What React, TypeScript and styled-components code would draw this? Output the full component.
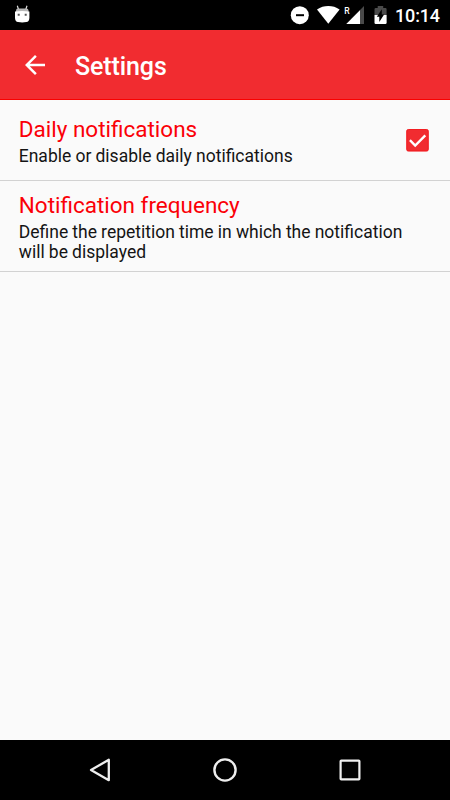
import React from "react";
import styled, { createGlobalStyle } from "styled-components";

const GlobalStyle = createGlobalStyle`
  * { box-sizing: border-box; }
  html, body { margin: 0; padding: 0; }
  body { background: #fafafa; font-family: Roboto, "Liberation Sans", sans-serif; }
  button { border: 0; padding: 0; margin: 0; background: none; font: inherit; }
`;

const Screen = styled.div`
  width: 450px;
  height: 800px;
  display: flex;
  flex-direction: column;
  background: #fafafa;
  overflow: hidden;
`;

const StatusBar = styled.header`
  height: 30px;
  flex: none;
  display: flex;
  justify-content: space-between;
  background: #000;
  color: #fff;
`;

const StatusGroup = styled.div`
  display: flex;
  align-items: center;
`;

const StatusIcon = styled.svg`
  display: block;
  flex: none;
`;

const Clock = styled.span`
  width: 55px;
  padding-top: 2px;
  font-size: 18px;
  letter-spacing: -0.15px;
  line-height: 28px;
  font-weight: 500;
  white-space: nowrap;
`;

const Toolbar = styled.nav`
  height: 70px;
  flex: none;
  display: flex;
  align-items: center;
  background: #f12c30;
  border-bottom: 1px solid #fa0000;
`;

const BackButton = styled.button`
  width: 30px;
  height: 30px;
  margin: 1px 0 0 20px;
  display: block;
`;

const ToolbarTitle = styled.h1`
  margin: 5px 0 0 25px;
  color: #fff;
  font-size: 25px;
  letter-spacing: -0.1px;
  line-height: 30px;
  font-weight: 500;
`;

const Preferences = styled.main`
  flex: 1;
`;

const PreferenceRow = styled.section<{ $height: number; $top: number }>`
  height: ${(p) => p.$height}px;
  padding: ${(p) => p.$top}px 19px 0 18.75px;
  display: flex;
  justify-content: space-between;
  border-bottom: 1px solid #d2d2d2;
`;

const PreferenceText = styled.div`
  max-width: 400px;
`;

const PreferenceTitle = styled.h2`
  margin: 0;
  color: #fb0007;
  font-size: 22.5px;
  line-height: 27px;
  font-weight: 400;
`;

const PreferenceSummary = styled.p`
  margin: 3px 0 0;
  color: #141414;
  font-size: 17.5px;
  word-spacing: -0.18px;
  line-height: 20px;
  font-weight: 400;
`;

const CheckButton = styled.button`
  width: 25px;
  height: 25px;
  margin-top: 12px;
  flex: none;
`;

const NavBar = styled.footer`
  height: 60px;
  flex: none;
  display: flex;
  justify-content: center;
  background: #000;
`;

const NavButton = styled.button`
  width: 125px;
  height: 60px;
  display: flex;
  align-items: center;
  justify-content: center;
`;

function StatusIcons() {
  return (
    <StatusIcon width="115" height="30" viewBox="280 0 115 30">
      <circle cx="299.8" cy="15.2" r="9" fill="#fff" />
      <path d="M296 15.2h8" stroke="#000" strokeWidth="2" />
      <path d="M328.3 23.7 317 9.4Q322.2 6 328.3 6T339.6 9.4Z" fill="#fff" />
      <text x="344.3" y="13.6" fill="#fff" fontSize="9.4" fontWeight="500" fontFamily="Roboto, sans-serif" textLength="5.4" lengthAdjust="spacingAndGlyphs">R</text>
      <path d="M364 6v18h-17.7Z" fill="#4a4a4a" />
      <path d="M360 10.2V24h-13.7Z" fill="#fff" />
      <path d="M375.7 8h2V6h5.5v2h2.2q1.2 0 1.2 1.2V15h-12.1V9.2q0-1.2 1.2-1.2Z" fill="#4a4a4a" />
      <path d="M374.5 15h12.1v7.8q0 1.2-1.2 1.2h-9.7q-1.2 0-1.2-1.2Z" fill="#fff" />
      <path d="M381.8 9.3v5.3h2.3L379.3 22v-5.3h-2.5Z" fill="#000" />
    </StatusIcon>
  );
}

function RobotIcon() {
  return (
    <StatusIcon width="45" height="30" viewBox="0 0 45 30">
      <path d="m17.3 5.7 1.3 4M27 5.7l-1.3 4" stroke="#ddd" strokeWidth="1.2" />
      <path d="M16 10.5Q16 8.5 18 8.5h8.5q2 0 2 2v1.7H16Z" fill="#b7b7b7" />
      <path d="M15 11.6q7-1.2 14.4 0V18q-.3 3.9-3 4.1-4.2.6-8.4 0-2.7-.2-3-4.1Z" fill="#fff" />
      <path d="M17.7 13.8h2v2h-2Zm7 0h2v2h-2Z" fill="#555" />
    </StatusIcon>
  );
}

function App() {
  return (
    <>
      <GlobalStyle />
      <Screen>
        <StatusBar>
          <RobotIcon />
          <StatusGroup>
            <StatusIcons />
            <Clock>10:14</Clock>
          </StatusGroup>
        </StatusBar>
        <Toolbar>
          <BackButton aria-label="Back">
            <svg width="30" height="30" viewBox="0 0 24 24" fill="#fff">
              <path d="M20 11H7.83l5.59-5.59L12 4l-8 8 8 8 1.41-1.41L7.83 13H20v-2z" />
            </svg>
          </BackButton>
          <ToolbarTitle>Settings</ToolbarTitle>
        </Toolbar>
        <Preferences>
          <PreferenceRow $height={81} $top={16}>
            <PreferenceText>
              <PreferenceTitle>Daily notifications</PreferenceTitle>
              <PreferenceSummary>Enable or disable daily notifications</PreferenceSummary>
            </PreferenceText>
            <CheckButton role="checkbox" aria-checked="true" aria-label="Daily notifications">
              <svg width="25" height="25" viewBox="0 0 25 25">
                <rect x="0.7" y="1.5" width="21.6" height="21.6" rx="1.6" fill="#f12c30" stroke="#f31015" strokeWidth="0.9" />
                <path d="m3.9 12.2 5.3 5.3L19.3 7.4" fill="none" stroke="#fff" strokeWidth="2.4" />
              </svg>
            </CheckButton>
          </PreferenceRow>
          <PreferenceRow $height={91} $top={11}>
            <PreferenceText>
              <PreferenceTitle>Notification frequency</PreferenceTitle>
              <PreferenceSummary>
                Define the repetition time in which the notification will be displayed
              </PreferenceSummary>
            </PreferenceText>
          </PreferenceRow>
        </Preferences>
        <NavBar>
          <NavButton aria-label="Back">
            <svg width="30" height="30" viewBox="85 755 30 30">
              <path d="M108.8 759.8v20.4L91 770Z" fill="none" stroke="#eee" strokeWidth="2.3" strokeLinejoin="round" />
            </svg>
          </NavButton>
          <NavButton aria-label="Home">
            <svg width="30" height="30" viewBox="0 0 30 30">
              <circle cx="15" cy="15" r="10.6" fill="none" stroke="#eee" strokeWidth="2.4" />
            </svg>
          </NavButton>
          <NavButton aria-label="Overview">
            <svg width="30" height="30" viewBox="0 0 30 30">
              <rect x="5.6" y="5.6" width="18.8" height="18.8" rx="0.7" fill="none" stroke="#eee" strokeWidth="2.2" />
            </svg>
          </NavButton>
        </NavBar>
      </Screen>
    </>
  );
}

export default App;
